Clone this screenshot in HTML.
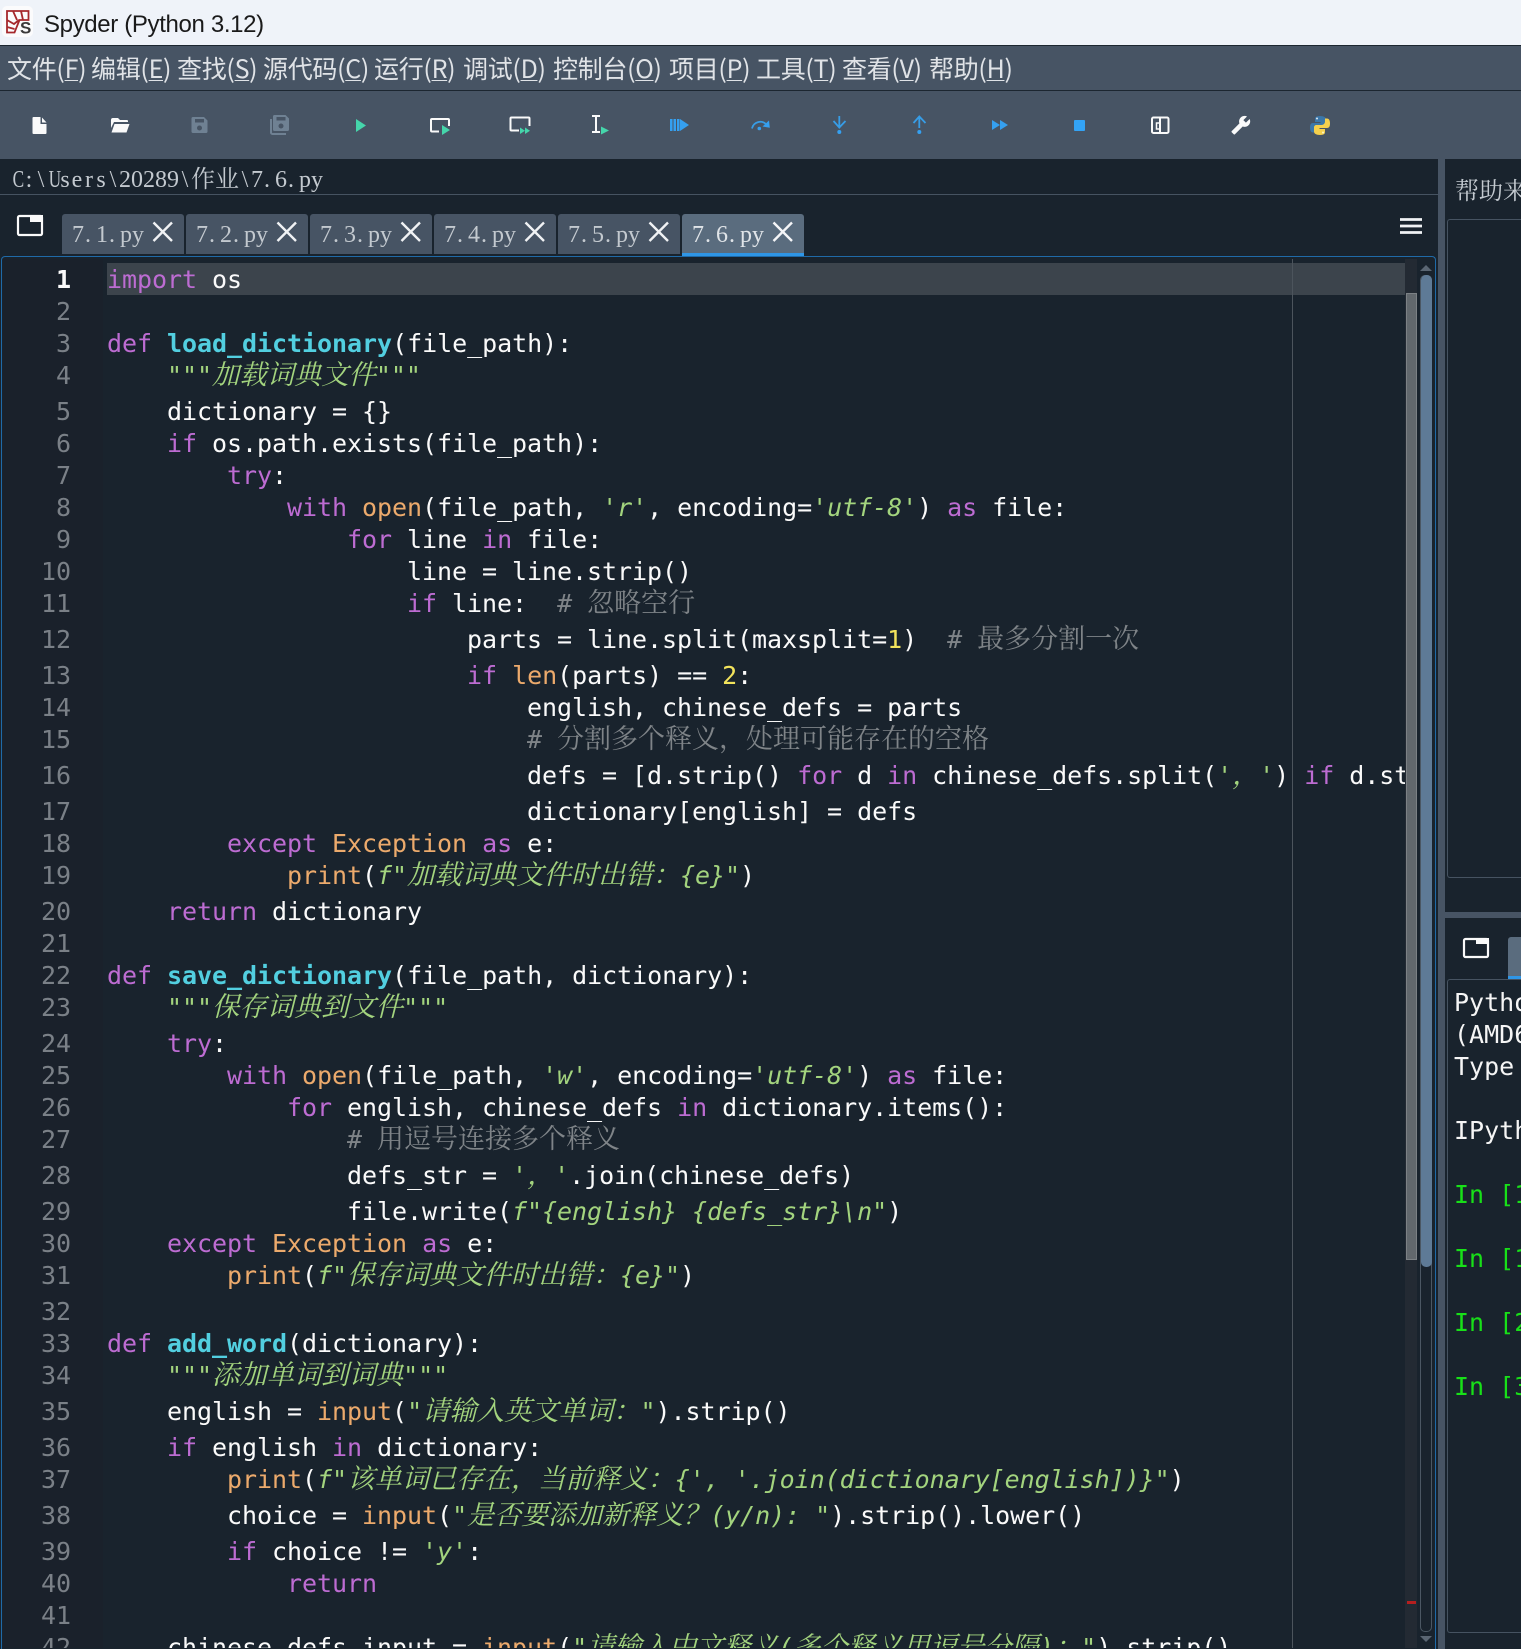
<!DOCTYPE html>
<html lang="zh"><head><meta charset="utf-8"><title>Spyder (Python 3.12)</title>
<style>
html,body{margin:0;padding:0;background:#19232d;width:1521px;height:1649px;overflow:hidden}
.a{position:absolute}
#wrap{position:absolute;left:0;top:0;width:1521px;height:1649px;overflow:hidden}
#t{left:0;top:0;width:1521px;height:45px;background:#eff3f9}
#tt{left:44px;top:9px;font:24px/32px "Liberation Sans",sans-serif;color:#1a1a1a;letter-spacing:-.35px;white-space:pre}
#m{left:0;top:45px;width:1521px;height:44px;background:#475464;border-top:1px solid #1c2630;border-bottom:1px solid #1c2630}
.mi{position:absolute;top:50px;font:25px/36px "Noto Sans CJK SC",sans-serif;color:#e0e3e7;white-space:pre;letter-spacing:-.3px}
.mi u{text-underline-offset:2px;text-decoration-thickness:1px}
#tb{left:0;top:91px;width:1521px;height:68px;background:#475464}
.s{position:absolute;font:24px/30px "Liberation Serif","Noto Serif CJK SC",serif;color:#c3c9cf;white-space:pre}
.s i{display:inline-block;width:12px;text-align:center;font-style:normal}
.s i.d{text-align:left;text-indent:1px}
.s i.w{transform:scaleX(.72);transform-origin:center}
.s i.c{width:24px;color:inherit}
.tab{position:absolute;top:214px;width:122px;height:40px;background:#475464;border-radius:3px 3px 0 0}
.tab.on{background:#5a6c7e;height:39px;border-bottom:3px solid #2f96e6}
.tab .s{left:10px;top:6px}
.tab svg{position:absolute;left:90px;top:7px}
#code{left:0;top:0;width:1405px;height:1648px;overflow:hidden}
.l{position:absolute;left:107px;margin-top:1px;height:32px;font:25px/32px "DejaVu Sans Mono","Noto Serif CJK SC",monospace;color:#fafafa;white-space:pre;letter-spacing:-.05px}
.n{position:absolute;left:20px;margin-top:1px;width:51px;text-align:right;height:32px;font:25px/32px "DejaVu Sans Mono",monospace;color:#7a8087;letter-spacing:-.05px}
.k{color:#bd6cd2}.f{color:#52cfe0;font-weight:bold}.b{color:#ecaa6c}.g{color:#a3d47e;font-style:italic}.c{color:#7f8488}.y{color:#f2e35c}
.l em{font:inherit;font-size:27px;line-height:0;font-family:"Noto Serif CJK SC",serif;letter-spacing:0}
.g em{font-style:italic;font-size:27.3px}.c em{font-style:normal}
.con{position:absolute;left:1454px;width:67px;overflow:hidden;height:32px;font:25px/32px "DejaVu Sans Mono",monospace;color:#f5f5f5;white-space:pre}
.con.i{color:#18e018}
</style></head><body>
<div id="wrap">
<div class="a" id="t"></div>
<svg class="a" style="left:0;top:0" width="40" height="45" viewBox="0 0 40 45">
<rect x="2" y="6" width="31" height="31" rx="5" fill="#fbfbfc"/>
<path d="M7 11H28.500V20H19.500L14.500 32.500H7Z M7 20L14 24L19 20 M13 11L17 20 M21 11L23 20 M7 27L14.500 29" fill="none" stroke="#a5282c" stroke-width="1.800"/>
<text x="20" y="33.500" font-family="Liberation Sans" font-size="17" font-weight="bold" fill="#3a3a3a">S</text>
</svg>
<div class="a" id="tt">Spyder (Python 3.12)</div>
<div class="a" id="m"></div>
<div class="mi" style="left:7px">文件(<u>F</u>)</div>
<div class="mi" style="left:91px">编辑(<u>E</u>)</div>
<div class="mi" style="left:177px">查找(<u>S</u>)</div>
<div class="mi" style="left:263px">源代码(<u>C</u>)</div>
<div class="mi" style="left:374px">运行(<u>R</u>)</div>
<div class="mi" style="left:463px">调试(<u>D</u>)</div>
<div class="mi" style="left:553px">控制台(<u>O</u>)</div>
<div class="mi" style="left:669px">项目(<u>P</u>)</div>
<div class="mi" style="left:756px">工具(<u>T</u>)</div>
<div class="mi" style="left:842px">查看(<u>V</u>)</div>
<div class="mi" style="left:929px">帮助(<u>H</u>)</div>
<div class="a" id="tb"></div>
<svg class="a" style="left:0;top:0" width="1521" height="160" viewBox="0 0 1521 160">
<path fill="#fafafa" d="M33.500 117H40.500V124H46.500V133a1 1 0 0 1-1 1H33.500a1 1 0 0 1-1-1V118a1 1 0 0 1 1-1Z"/><path fill="#fafafa" d="M42 117.500L46.500 122.500H42Z"/>
<path fill="#fafafa" d="M111 120a2 2 0 0 1 2-2h5l2 2h7a1 1 0 0 1 1 1v1H114l-3 6z"/><path fill="#fafafa" d="M114.500 124H129.500L126.500 132.500H111.500Z"/>
<g id="fl"><path fill="#6f8193" d="M193 117H204L207.500 120.500V131.500a1.500 1.500 0 0 1-1.500 1.500H193a1.500 1.500 0 0 1-1.500-1.500V118.500a1.500 1.500 0 0 1 1.500-1.500Z"/><rect x="195" y="119" width="9" height="3.500" fill="#475464"/><circle cx="199.500" cy="128" r="2.500" fill="#475464"/></g>
<path fill="#6f8193" d="M274.500 115H285.500L289 118.500V129.500a1.500 1.500 0 0 1-1.500 1.500H274.500a1.500 1.500 0 0 1-1.500-1.500V116.500a1.500 1.500 0 0 1 1.500-1.500Z"/><rect x="276.500" y="117" width="9" height="3.500" fill="#475464"/><circle cx="281" cy="126" r="2.500" fill="#475464"/>
<path fill="none" stroke="#6f8193" stroke-width="2" d="M271 119V132.500a1.500 1.500 0 0 0 1.500 1.500H286"/>
<polygon points="356,119 366,125.500 356,132" fill="#45d6ab"/>
<path fill="none" stroke="#fafafa" stroke-width="2" d="M439 131.500H432a1 1 0 0 1-1-1V120a1 1 0 0 1 1-1H448a1 1 0 0 1 1 1V126"/><polygon points="442,125 450,130 442,135" fill="#45d6ab"/>
<path fill="none" stroke="#fafafa" stroke-width="2" d="M519 130.500H511.500a1 1 0 0 1-1-1V118.500a1 1 0 0 1 1-1H528.500a1 1 0 0 1 1 1V126"/><polygon points="520,127.500 525,130.800 520,134" fill="#45d6ab"/><polygon points="525,127.500 530,130.800 525,134" fill="#45d6ab"/>
<path fill="none" stroke="#fafafa" stroke-width="2" d="M592 116H600M596 116V132M592 132H600"/><polygon points="601,126.500 609,130.500 601,134.500" fill="#45d6ab"/>
<g fill="#35a0f0"><rect x="670" y="119" width="2.500" height="12"/><rect x="673.500" y="119" width="2.500" height="12"/><rect x="677" y="119" width="2.500" height="12"/><polygon points="680,119 689,125 680,131"/>
<circle cx="759.300" cy="128.500" r="1.800"/><path d="M762.500 126.500L769.800 127.800L769 120.500Z"/>
<circle cx="839.300" cy="132" r="2"/><circle cx="919.300" cy="132" r="2"/>
<polygon points="992,120 1000,125 992,130"/><polygon points="1000,120 1008,125 1000,130"/><rect x="1074" y="120" width="11" height="11" rx="1" fill="#33a3f5"/></g>
<g fill="none" stroke="#379de6" stroke-width="1.800"><path d="M752 128.500a8.500 8.500 0 0 1 14.500-4"/><path d="M833.500 121L839.300 127.500L845.500 121M839.300 116V127"/><path d="M913.500 123L919.300 116.500L925.500 123M919.300 117V128"/></g>
<rect x="1152" y="117.500" width="16.500" height="15.500" rx="1.500" fill="none" stroke="#fafafa" stroke-width="2"/><path fill="none" stroke="#fafafa" stroke-width="2" d="M1160 117.500V133"/><path fill="none" stroke="#fafafa" stroke-width="1.500" d="M1159 123H1156.500V129H1159"/>
<g transform="translate(1251 115) scale(-.85 .85)"><path fill="#fafafa" d="M22.700 19l-9.100-9.100c.9-2.300.4-5-1.500-6.900-2-2-5-2.400-7.400-1.300L9 6 6 9 1.600 4.700C.4 7.100.9 10.100 2.900 12.100c1.900 1.900 4.600 2.400 6.900 1.500l9.100 9.100c.4.400 1 .4 1.400 0l2.300-2.300c.5-.4.5-1.100.1-1.400z"/></g>
<path id="py" fill="#3b77a9" d="M1320 116c-5 0-5 2-5 3.500v2.500h5.500v1h-7.500c-2 0-3 1.500-3 4.500s1 5 3 5h2v-3c0-2 1.500-3.500 3.500-3.500h5c1.500 0 2.500-1 2.500-2.500v-4c0-2-2-3.500-6-3.500z"/>
<path fill="#f5d04d" transform="rotate(180 1320 125.500)" d="M1320 116c-5 0-5 2-5 3.500v2.500h5.500v1h-7.500c-2 0-3 1.500-3 4.500s1 5 3 5h2v-3c0-2 1.500-3.500 3.500-3.500h5c1.500 0 2.500-1 2.500-2.500v-4c0-2-2-3.500-6-3.500z"/>
<circle cx="1317" cy="118.500" r="1" fill="#dfe8ef"/><circle cx="1323" cy="132.500" r="1" fill="#fff6c8"/>
</svg>

<div class="s" style="left:11px;top:165px"><i class="w">C</i><i>:</i><i>\</i><i class="w">U</i><i>s</i><i>e</i><i>r</i><i>s</i><i>\</i><i>2</i><i>0</i><i>2</i><i>8</i><i>9</i><i>\</i><i class="c">作</i><i class="c">业</i><i>\</i><i>7</i><i class="d">.</i><i>6</i><i class="d">.</i><i>p</i><i>y</i></div>
<div class="a" style="left:0;top:194px;width:1438px;height:1px;background:#465361"></div>

<svg class="a" style="left:0;top:205px" width="50" height="40" viewBox="0 0 50 40"><rect x="18" y="11" width="24" height="19" rx="1.500" fill="none" stroke="#fafafa" stroke-width="2.200"/><rect x="30" y="10" width="13" height="7" fill="#fafafa"/></svg>

<div class="tab" style="left:62px"><div class="s"><i>7</i><i class="d">.</i><i>1</i><i class="d">.</i><i>p</i><i>y</i></div><svg width="22" height="22"><path d="M1.500 1.500L20 20M20 1.500L1.500 20" stroke="#f0f2f4" stroke-width="2.400"/></svg></div>
<div class="tab" style="left:186px"><div class="s"><i>7</i><i class="d">.</i><i>2</i><i class="d">.</i><i>p</i><i>y</i></div><svg width="22" height="22"><path d="M1.500 1.500L20 20M20 1.500L1.500 20" stroke="#f0f2f4" stroke-width="2.400"/></svg></div>
<div class="tab" style="left:310px"><div class="s"><i>7</i><i class="d">.</i><i>3</i><i class="d">.</i><i>p</i><i>y</i></div><svg width="22" height="22"><path d="M1.500 1.500L20 20M20 1.500L1.500 20" stroke="#f0f2f4" stroke-width="2.400"/></svg></div>
<div class="tab" style="left:434px"><div class="s"><i>7</i><i class="d">.</i><i>4</i><i class="d">.</i><i>p</i><i>y</i></div><svg width="22" height="22"><path d="M1.500 1.500L20 20M20 1.500L1.500 20" stroke="#f0f2f4" stroke-width="2.400"/></svg></div>
<div class="tab" style="left:558px"><div class="s"><i>7</i><i class="d">.</i><i>5</i><i class="d">.</i><i>p</i><i>y</i></div><svg width="22" height="22"><path d="M1.500 1.500L20 20M20 1.500L1.500 20" stroke="#f0f2f4" stroke-width="2.400"/></svg></div>
<div class="tab on" style="left:682px"><div class="s" style="color:#e0e4e8"><i>7</i><i class="d">.</i><i>6</i><i class="d">.</i><i>p</i><i>y</i></div><svg width="22" height="22"><path d="M1.500 1.500L20 20M20 1.500L1.500 20" stroke="#f5f6f8" stroke-width="2.400"/></svg></div>

<svg class="a" style="left:1395px;top:212px" width="32" height="26"><path d="M5 7.500H27M5 14H27M5 20.500H27" stroke="#f0f2f4" stroke-width="2.800"/></svg>

<!-- editor frame -->
<div class="a" style="left:1px;top:256px;width:1435px;height:1393px;box-sizing:border-box;border:1px solid #1f6aa8;border-bottom:0;border-radius:4px 4px 0 0"></div>
<div class="a" style="left:3px;top:259px;width:100px;height:1389px;background:#1a212b"></div>
<div class="a" style="left:107px;top:263px;width:1298px;height:32px;background:#3c444c"></div>
<div class="a" style="left:1292px;top:259px;width:1px;height:1389px;background:#4c545c"></div>

<div class="a" id="code">
<div class="l" style="top:263px"><span class="k">import</span> os</div>
<div class="l" style="top:327px"><span class="k">def</span> <span class="f">load_dictionary</span>(file_path):</div>
<div class="l" style="top:359px">    <span class="g">"""<em>加载词典文件</em>"""</span></div>
<div class="l" style="top:395px">    dictionary = {}</div>
<div class="l" style="top:427px">    <span class="k">if</span> os.path.exists(file_path):</div>
<div class="l" style="top:459px">        <span class="k">try</span>:</div>
<div class="l" style="top:491px">            <span class="k">with</span> <span class="b">open</span>(file_path, <span class="g">'r'</span>, encoding=<span class="g">'utf-8'</span>) <span class="k">as</span> file:</div>
<div class="l" style="top:523px">                <span class="k">for</span> line <span class="k">in</span> file:</div>
<div class="l" style="top:555px">                    line = line.strip()</div>
<div class="l" style="top:587px">                    <span class="k">if</span> line:  <span class="c"># <em>忽略空行</em></span></div>
<div class="l" style="top:623px">                        parts = line.split(maxsplit=<span class="y">1</span>)  <span class="c"># <em>最多分割一次</em></span></div>
<div class="l" style="top:659px">                        <span class="k">if</span> <span class="b">len</span>(parts) == <span class="y">2</span>:</div>
<div class="l" style="top:691px">                            english, chinese_defs = parts</div>
<div class="l" style="top:723px">                            <span class="c"># <em>分割多个释义，处理可能存在的空格</em></span></div>
<div class="l" style="top:759px">                            defs = [d.strip() <span class="k">for</span> d <span class="k">in</span> chinese_defs.split(<span class="g">'<em style="font-size:27px">，</em>'</span>) <span class="k">if</span> d.strip()]</div>
<div class="l" style="top:795px">                            dictionary[english] = defs</div>
<div class="l" style="top:827px">        <span class="k">except</span> <span class="b">Exception</span> <span class="k">as</span> e:</div>
<div class="l" style="top:859px">            <span class="b">print</span>(<span class="g">f"<em>加载词典文件时出错：</em>{e}"</span>)</div>
<div class="l" style="top:895px">    <span class="k">return</span> dictionary</div>
<div class="l" style="top:959px"><span class="k">def</span> <span class="f">save_dictionary</span>(file_path, dictionary):</div>
<div class="l" style="top:991px">    <span class="g">"""<em>保存词典到文件</em>"""</span></div>
<div class="l" style="top:1027px">    <span class="k">try</span>:</div>
<div class="l" style="top:1059px">        <span class="k">with</span> <span class="b">open</span>(file_path, <span class="g">'w'</span>, encoding=<span class="g">'utf-8'</span>) <span class="k">as</span> file:</div>
<div class="l" style="top:1091px">            <span class="k">for</span> english, chinese_defs <span class="k">in</span> dictionary.items():</div>
<div class="l" style="top:1123px">                <span class="c"># <em>用逗号连接多个释义</em></span></div>
<div class="l" style="top:1159px">                defs_str = <span class="g">'<em style="font-size:27px">，</em>'</span>.join(chinese_defs)</div>
<div class="l" style="top:1195px">                file.write(<span class="g">f"{english} {defs_str}\n"</span>)</div>
<div class="l" style="top:1227px">    <span class="k">except</span> <span class="b">Exception</span> <span class="k">as</span> e:</div>
<div class="l" style="top:1259px">        <span class="b">print</span>(<span class="g">f"<em>保存词典文件时出错：</em>{e}"</span>)</div>
<div class="l" style="top:1327px"><span class="k">def</span> <span class="f">add_word</span>(dictionary):</div>
<div class="l" style="top:1359px">    <span class="g">"""<em>添加单词到词典</em>"""</span></div>
<div class="l" style="top:1395px">    english = <span class="b">input</span>(<span class="g">"<em>请输入英文单词：</em>"</span>).strip()</div>
<div class="l" style="top:1431px">    <span class="k">if</span> english <span class="k">in</span> dictionary:</div>
<div class="l" style="top:1463px">        <span class="b">print</span>(<span class="g">f"<em>该单词已存在，当前释义：</em>{', '.join(dictionary[english])}"</span>)</div>
<div class="l" style="top:1499px">        choice = <span class="b">input</span>(<span class="g">"<em style="font-size:27px">是否要添加新释义？</em>(y/n): "</span>).strip().lower()</div>
<div class="l" style="top:1535px">        <span class="k">if</span> choice != <span class="g">'y'</span>:</div>
<div class="l" style="top:1567px">            <span class="k">return</span></div>
<div class="l" style="top:1631px">    chinese_defs_input = <span class="b">input</span>(<span class="g">"<em>请输入中文释义</em>(<em>多个释义用逗号分隔</em>)<em>：</em>"</span>).strip()</div>

<div class="n" style="top:263px;color:#fafafa;font-weight:bold">1</div>
<div class="n" style="top:295px">2</div><div class="n" style="top:327px">3</div><div class="n" style="top:359px">4</div><div class="n" style="top:395px">5</div><div class="n" style="top:427px">6</div><div class="n" style="top:459px">7</div><div class="n" style="top:491px">8</div><div class="n" style="top:523px">9</div><div class="n" style="top:555px">10</div><div class="n" style="top:587px">11</div><div class="n" style="top:623px">12</div><div class="n" style="top:659px">13</div><div class="n" style="top:691px">14</div><div class="n" style="top:723px">15</div><div class="n" style="top:759px">16</div><div class="n" style="top:795px">17</div><div class="n" style="top:827px">18</div><div class="n" style="top:859px">19</div><div class="n" style="top:895px">20</div><div class="n" style="top:927px">21</div><div class="n" style="top:959px">22</div><div class="n" style="top:991px">23</div><div class="n" style="top:1027px">24</div><div class="n" style="top:1059px">25</div><div class="n" style="top:1091px">26</div><div class="n" style="top:1123px">27</div><div class="n" style="top:1159px">28</div><div class="n" style="top:1195px">29</div><div class="n" style="top:1227px">30</div><div class="n" style="top:1259px">31</div><div class="n" style="top:1295px">32</div><div class="n" style="top:1327px">33</div><div class="n" style="top:1359px">34</div><div class="n" style="top:1395px">35</div><div class="n" style="top:1431px">36</div><div class="n" style="top:1463px">37</div><div class="n" style="top:1499px">38</div><div class="n" style="top:1535px">39</div><div class="n" style="top:1567px">40</div><div class="n" style="top:1599px">41</div><div class="n" style="top:1631px">42</div>
</div>

<!-- flag area + scrollbar -->
<div class="a" style="left:1405px;top:259px;width:12px;height:1389px;background:#232a33"></div>
<div class="a" style="left:1406px;top:293px;width:11px;height:967px;box-sizing:border-box;background:#62686d;border:1px solid #7c8185"></div>
<div class="a" style="left:1407px;top:1601px;width:9px;height:3px;background:#b51f1f"></div>
<div class="a" style="left:1420px;top:275px;width:12px;height:1357px;box-sizing:border-box;border:1px solid #4b5763;border-radius:5px"></div>
<div class="a" style="left:1420.500px;top:275px;width:11px;height:992px;background:#5e7a96;border-radius:5px"></div>
<svg class="a" style="left:1419px;top:263px" width="14" height="10"><polygon points="7,2 13,8 1,8" fill="#5a6673"/></svg>
<svg class="a" style="left:1419px;top:1634px" width="14" height="10"><polygon points="7,8 13,2 1,2" fill="#5a6673"/></svg>

<!-- splitters -->
<div class="a" style="left:1438px;top:159px;width:7px;height:1490px;background:#475464"></div>
<div class="a" style="left:1438px;top:912px;width:83px;height:6px;background:#475464"></div>

<!-- right top -->
<div class="a" style="left:1455px;top:171px;width:66px;overflow:hidden;font:24px/36px 'Noto Serif CJK SC',serif;color:#c3c9cf;white-space:pre">帮助来源</div>
<div class="a" style="left:1447px;top:219px;width:74px;height:659px;box-sizing:border-box;border:1px solid #465361;border-right:0;border-radius:3px 0 0 3px"></div>

<!-- right bottom -->
<svg class="a" style="left:1455px;top:930px" width="44" height="36"><rect x="9" y="9" width="24" height="18" rx="1.500" fill="none" stroke="#fafafa" stroke-width="2.200"/><rect x="21" y="8" width="13" height="6" fill="#fafafa"/></svg>
<div class="a" style="left:1508px;top:937px;width:13px;height:39px;background:#5a6c7e;border-bottom:3px solid #2f96e6;border-radius:3px 0 0 0"></div>
<div class="a" style="left:1447px;top:979px;width:74px;height:654px;box-sizing:border-box;border:1px solid #465361;border-right:0;border-radius:3px 0 0 3px"></div>
<div class="con" style="top:987px">Python 3.12</div>
<div class="con" style="top:1019px">(AMD64)</div>
<div class="con" style="top:1051px">Type 'copyright'</div>
<div class="con" style="top:1115px">IPython 8</div>
<div class="con i" style="top:1179px">In [1</div>
<div class="con i" style="top:1243px">In [1</div>
<div class="con i" style="top:1307px">In [2</div>
<div class="con i" style="top:1371px">In [3</div>
</div>
</body></html>
